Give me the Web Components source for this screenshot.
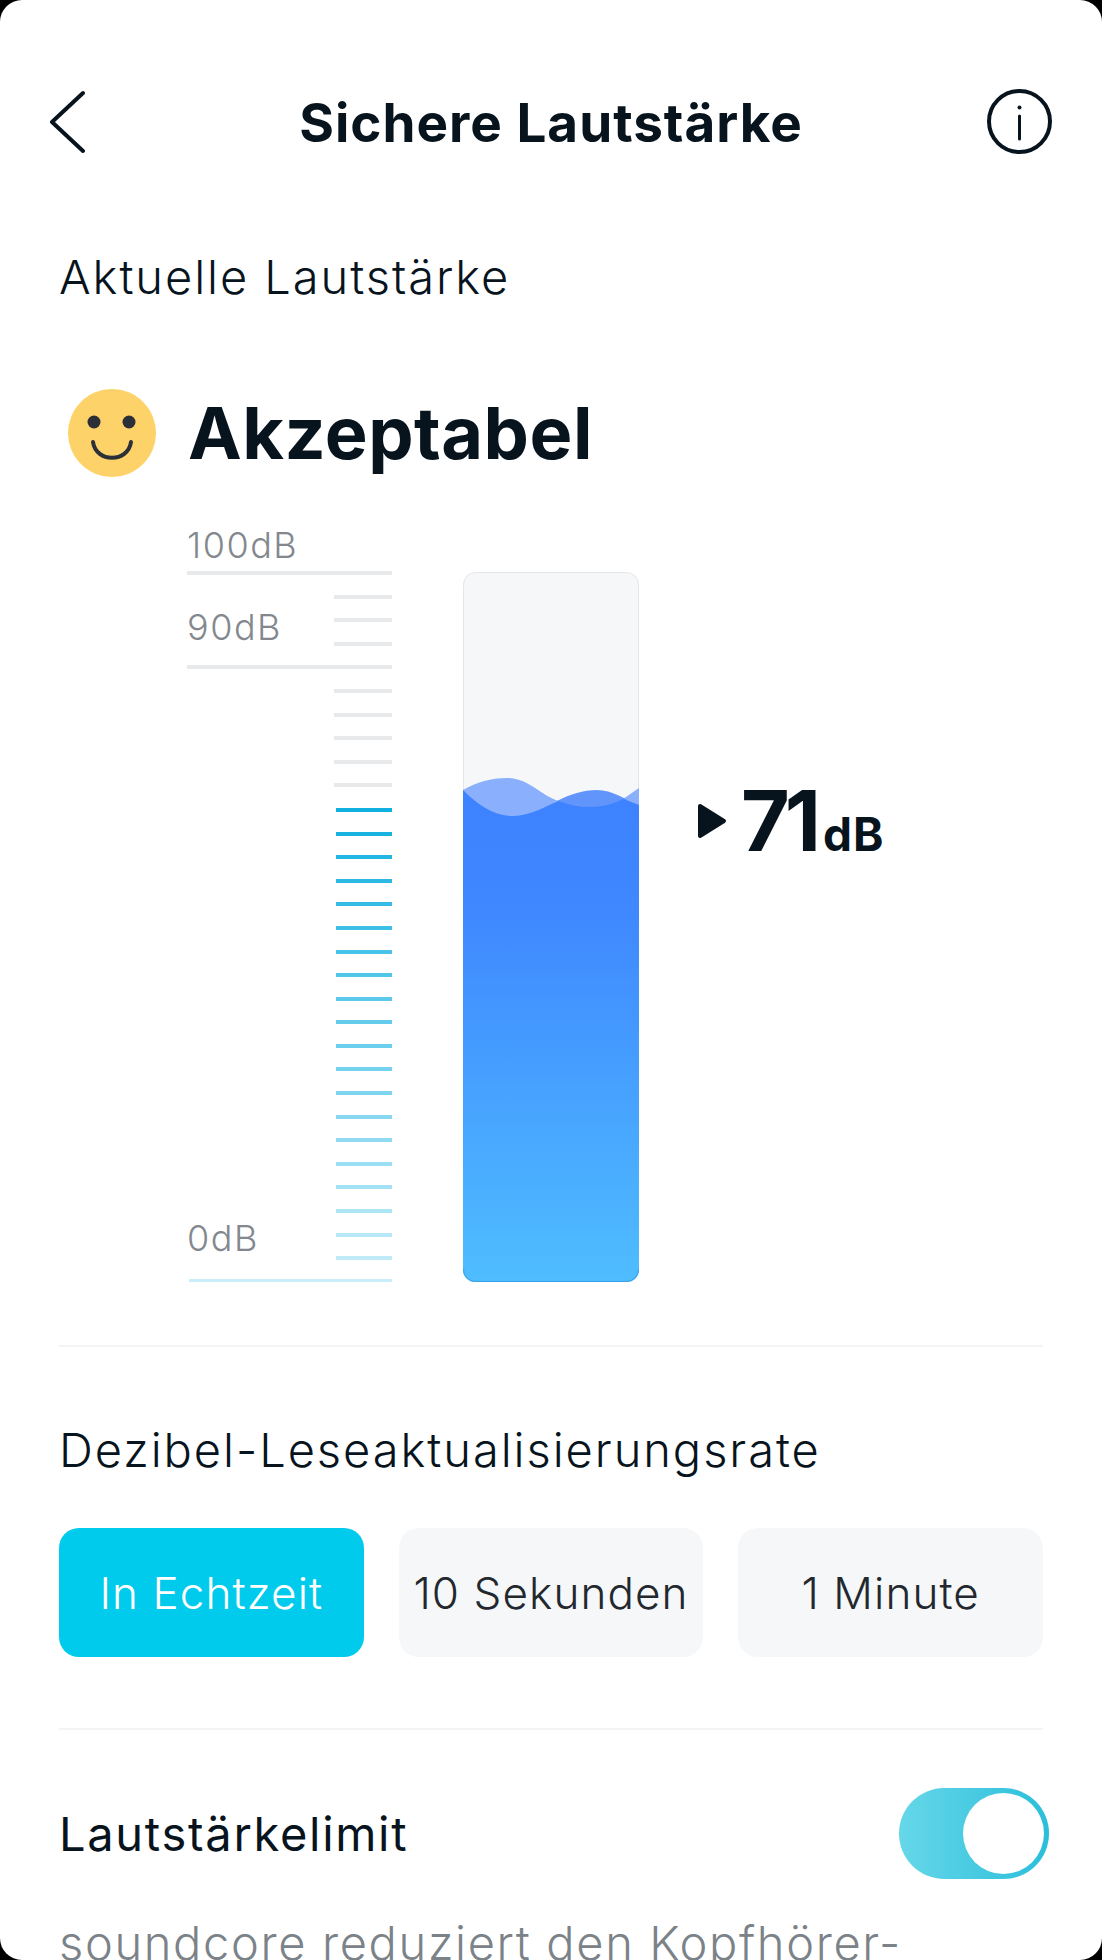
<!DOCTYPE html>
<html lang="de">
<head>
<meta charset="utf-8">
<title>Sichere Lautstärke</title>
<style>
    html, body { margin: 0; background: #000; }
    body { font-family: "Inter", "Liberation Sans", sans-serif; color: #07141d; }
</style>
</head>
<body>
<safe-volume-screen></safe-volume-screen>
<script>
class NavBar extends HTMLElement {
    constructor () {
        super();
        this.attachShadow({ mode: 'open' }).innerHTML = `
            <style>
                :host { display: grid; grid-template-columns: 1fr auto 1fr; align-items: center; height: 65px; padding: 89px 50px 0 50px; }
                svg { display: block; }
                .info { justify-self: end; }
                h1 { margin: 0; padding-top: 3px; font-size: 53px; font-weight: 700; letter-spacing: 1px; line-height: 62px; color: #07141d; white-space: nowrap; }
            </style>
            <svg width="36" height="64" viewBox="0 0 36 64"><path d="M33 3 L2 32 L33 61" fill="none" stroke="#07141d" stroke-width="4" stroke-linecap="round" stroke-linejoin="round"/></svg>
            <h1><slot></slot></h1>
            <svg class="info" width="65" height="65" viewBox="0 0 65 65">
                <circle cx="32.5" cy="32.5" r="30.5" fill="none" stroke="#07141d" stroke-width="4"/>
                <circle cx="32.5" cy="18.5" r="2" fill="#07141d"/>
                <path d="M32.5 27 V50" stroke="#07141d" stroke-width="3" stroke-linecap="round"/>
            </svg>`;
    }
}

class SectionTitle extends HTMLElement {
    constructor () {
        super();
        this.attachShadow({ mode: 'open' }).innerHTML = `
            <style>
                :host { display: block; font-size: 47px; font-weight: 350; line-height: 54px; letter-spacing: 1.95px; color: #07141d; white-space: nowrap; }
            </style>
            <slot></slot>`;
    }
}

class LevelStatus extends HTMLElement {
    constructor () {
        super();
        this.attachShadow({ mode: 'open' }).innerHTML = `
            <style>
                :host { display: flex; align-items: center; gap: 32px; height: 88px; padding-left: 9px; }
                svg { display: block; flex: none; }
                span { font-size: 72px; font-weight: 700; line-height: 88px; letter-spacing: 0.5px; color: #07141d; }
            </style>
            <svg width="88" height="88" viewBox="0 0 88 88">
                <circle cx="44" cy="44" r="44" fill="#fdd268"/>
                <circle cx="26" cy="33" r="6.5" fill="#2b2f38"/>
                <circle cx="61" cy="33" r="6.5" fill="#2b2f38"/>
                <path d="M25 53 C28 74 60 74 63 53" fill="none" stroke="#2b2f38" stroke-width="4" stroke-linecap="round"/>
            </svg>
            <span><slot></slot></span>`;
    }
}

class DbScale extends HTMLElement {
    constructor () {
        super();
        let ticks = '';
        for (let i = 0; i <= 30; i++) {
            const long = i === 0 || i === 4 || i === 30;
            let color = '#e8e9eb';
            if (i >= 10) {
                const k = (i - 10) / 20;
                const r = Math.round(16 + (200 - 16) * k);
                const g = Math.round(176 + (238 - 176) * k);
                const b = Math.round(224 + (250 - 224) * k);
                color = `rgb(${r},${g},${b})`;
            }
            const cls = long ? 'long' : (i >= 10 ? 'short on' : 'short');
            ticks += `<i class="${cls}${i === 30 ? ' end' : ''}" style="grid-row:${i + 1};background:${color}"></i>`;
        }
        this.attachShadow({ mode: 'open' }).innerHTML = `
            <style>
                :host { display: block; width: 205px; font-size: 36px; font-weight: 300; letter-spacing: 1.5px; color: #83888e; }
                .top { height: 51px; line-height: 50px; }
                .grid { display: grid; grid-template-columns: 147px 58px; grid-auto-rows: 23.6px; }
                i { display: block; height: 4px; }
                .long { grid-column: 1 / 3; }
                .short { grid-column: 2; }
                .on { margin: 1px 0 0 2px; }
                .end { height: 3px; margin-left: 2px; }
                .label { grid-column: 1; display: flex; align-items: center; }
            </style>
            <div class="top">100dB</div>
            <div class="grid">
                ${ticks}
                <div class="label" style="grid-row:2 / 5;padding-bottom:5px">90dB</div>
                <div class="label" style="grid-row:28 / 31;padding-bottom:10px">0dB</div>
            </div>`;
    }
}

class LevelBar extends HTMLElement {
    constructor () {
        super();
        this.attachShadow({ mode: 'open' }).innerHTML = `
            <style>
                :host { display: block; width: 176px; height: 710px; }
                svg { display: block; }
            </style>
            <svg width="176" height="710" viewBox="0 0 176 710">
                <defs>
                    <linearGradient id="water" gradientUnits="userSpaceOnUse" x1="0" y1="218" x2="0" y2="710">
                        <stop offset="0" stop-color="#3d82ff"/>
                        <stop offset="0.25" stop-color="#3f88ff"/>
                        <stop offset="1" stop-color="#4fbdff"/>
                    </linearGradient>
                    <clipPath id="round"><rect width="176" height="710" rx="12"/></clipPath>
                </defs>
                <rect x="0.5" y="0.5" width="175" height="709" rx="12" fill="#f5f7f9" stroke="#e3e5e9"/>
                <g clip-path="url(#round)">
                    <path d="M0 218 C14 210 28 206 44 206 C66 206 78 224 96 229 L96 260 L0 260 Z" fill="#8ab0fd"/>
                    <path d="M160 227 L176 216 L176 250 L160 250 Z" fill="#8ab0fd"/>
                    <path d="M94 229 C108 222 120 218 134 218 C150 218 160 227 176 233 L176 260 L94 260 Z" fill="#6195fb"/>
                    <path d="M0 218 C14 232 30 244 50 244 C68 244 82 234 96 229 C106 233 116 235 126 235 C140 235 150 232 160 227 C165 229 170 231 176 233 L176 710 L0 710 Z" fill="url(#water)"/>
                </g>
                <path d="M0.5 697 A12 12 0 0 0 12.5 709.5 H163.5 A12 12 0 0 0 175.5 697" fill="none" stroke="#3a9fe8" stroke-width="1"/>
            </svg>`;
    }
}

class DbReadout extends HTMLElement {
    constructor () {
        super();
        this.attachShadow({ mode: 'open' }).innerHTML = `
            <style>
                :host { display: flex; align-items: baseline; height: 84px; color: #07141d; }
                svg { display: block; flex: none; align-self: center; margin-right: 14px; }
                .num { font-size: 84px; font-weight: 700; line-height: 84px; letter-spacing: -5px; }
                .unit { font-size: 46px; font-weight: 700; line-height: 84px; margin-left: 7px; letter-spacing: 1px; }
            </style>
            <svg width="30" height="36" viewBox="0 0 30 36"><path d="M3 3 L27 18 L3 33 Z" fill="#07141d" stroke="#07141d" stroke-width="4" stroke-linejoin="round"/></svg>
            <span class="num"><slot></slot></span><span class="unit">dB</span>`;
    }
}

class RateOption extends HTMLElement {
    constructor () {
        super();
        this.attachShadow({ mode: 'open' }).innerHTML = `
            <style>
                :host { display: flex; align-items: center; justify-content: center; height: 129px; border-radius: 20px; background: #f5f7f9; color: #22282e; font-size: 44px; font-weight: 300; letter-spacing: 1.1px; }
                :host([active]) { background: #00cbec; color: #fff; }
            </style>
            <slot></slot>`;
    }
}

class RatePicker extends HTMLElement {
    constructor () {
        super();
        this.attachShadow({ mode: 'open' }).innerHTML = `
            <style>
                :host { display: grid; grid-template-columns: repeat(3, 1fr); gap: 35px; }
            </style>
            <slot></slot>`;
    }
}

class ToggleSwitch extends HTMLElement {
    constructor () {
        super();
        this.attachShadow({ mode: 'open' }).innerHTML = `
            <style>
                :host { display: flex; justify-content: flex-end; align-items: center; box-sizing: border-box; width: 150px; height: 91px; padding-right: 5px; border-radius: 46px; background: linear-gradient(90deg, #66d7e9, #2abedb); }
                div { width: 81px; height: 81px; border-radius: 50%; background: #fff; }
            </style>
            <div></div>`;
    }
}

class HairLine extends HTMLElement {
    constructor () {
        super();
        this.attachShadow({ mode: 'open' }).innerHTML = `
            <style>
                :host { display: block; height: 2px; background: #f3f4f5; }
            </style>`;
    }
}

class SafeVolumeScreen extends HTMLElement {
    constructor () {
        super();
        this.attachShadow({ mode: 'open' }).innerHTML = `
            <style>
                :host { display: block; width: 1102px; height: 1960px; overflow: hidden; background: #fff; border-radius: 22px; }
                .body { padding: 0 59px 0 59px; }
                .current { margin-top: 96px; }
                level-status { margin-top: 85px; }
                .meter { display: flex; align-items: flex-start; margin-top: 43px; padding-left: 128px; }
                level-bar { margin: 52px 0 0 71px; }
                db-readout { margin: 259px 0 0 58px; }
                .one { margin-top: 43px; }
                .rate { margin-top: 76px; }
                rate-picker { margin-top: 51px; }
                .two { margin-top: 71px; }
                .limit { display: flex; align-items: center; justify-content: space-between; margin-top: 58px; margin-right: -6px; }
                .limit section-title { font-weight: 400; letter-spacing: 1.7px; }
                .desc { margin-top: 33px; font-size: 47px; font-weight: 300; line-height: 62px; letter-spacing: 1.65px; color: #7b8288; white-space: nowrap; }
            </style>
            <nav-bar>Sichere Lautstärke</nav-bar>
            <div class="body">
                <section-title class="current">Aktuelle Lautstärke</section-title>
                <level-status>Akzeptabel</level-status>
                <div class="meter">
                    <db-scale></db-scale>
                    <level-bar></level-bar>
                    <db-readout>71</db-readout>
                </div>
                <hair-line class="one"></hair-line>
                <section-title class="rate">Dezibel-Leseaktualisierungsrate</section-title>
                <rate-picker>
                    <rate-option active>In Echtzeit</rate-option>
                    <rate-option>10 Sekunden</rate-option>
                    <rate-option>1 Minute</rate-option>
                </rate-picker>
                <hair-line class="two"></hair-line>
                <div class="limit">
                    <section-title>Lautstärkelimit</section-title>
                    <toggle-switch></toggle-switch>
                </div>
                <div class="desc">soundcore reduziert den Kopfhörer-</div>
            </div>`;
    }
}

customElements.define('nav-bar', NavBar);
customElements.define('section-title', SectionTitle);
customElements.define('level-status', LevelStatus);
customElements.define('db-scale', DbScale);
customElements.define('level-bar', LevelBar);
customElements.define('db-readout', DbReadout);
customElements.define('rate-option', RateOption);
customElements.define('rate-picker', RatePicker);
customElements.define('toggle-switch', ToggleSwitch);
customElements.define('hair-line', HairLine);
customElements.define('safe-volume-screen', SafeVolumeScreen);
</script>
</body>
</html>
